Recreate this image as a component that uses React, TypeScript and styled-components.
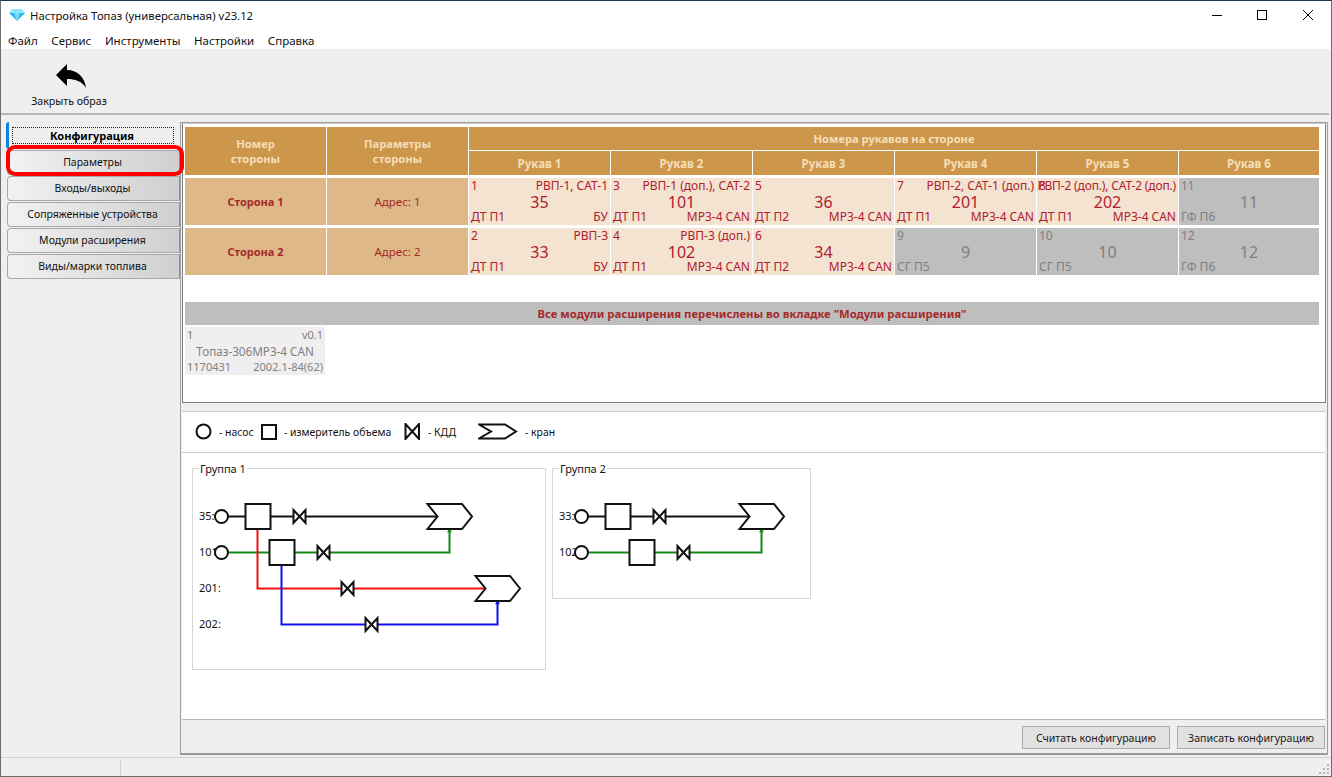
import React from 'react'
import styled, { createGlobalStyle } from 'styled-components'

const FONT = `"Noto Sans", "Open Sans", "Liberation Sans", sans-serif`
const HEAD_BG = '#cc964b'
const HEAD_TEXT = '#f5dfb8'
const SIDE_BG = '#deb887'
const BROWN = '#a52a2a'
const GRAY_CELL = '#bebebe'

const GlobalStyle = createGlobalStyle`
  html, body {
    margin: 0;
    padding: 0;
    background: #efefef;
  }
  * {
    box-sizing: border-box;
  }
`

const Window = styled.div`
  display: flex;
  flex-direction: column;
  width: 1332px;
  height: 777px;
  overflow: hidden;
  background: #efefef;
  border: 1px solid #6d6d6d;
  border-top-color: #1d3557;
  font-family: ${FONT};
  font-size: 11px;
  color: #111;
`

const TitleBar = styled.div`
  display: flex;
  align-items: center;
  height: 29px;
  flex-shrink: 0;
  background: #fff;
  padding: 0 0 1px 8px;
  font-size: 11.3px;
`

const TitleText = styled.span`
  margin-left: 5px;
  flex: 1;
`

const WinButton = styled.div`
  display: flex;
  align-items: center;
  justify-content: center;
  width: 45.75px;
  height: 28px;
`

const Controls = styled.div`
  display: flex;
`

const MenuBar = styled.div`
  display: flex;
  gap: 13.6px;
  align-items: center;
  height: 19px;
  flex-shrink: 0;
  background: #fff;
  padding: 2px 0 0 7px;
  font-size: 11.5px;
`

const Toolbar = styled.div`
  height: 66px;
  flex-shrink: 0;
  padding: 15px 0 0 29px;
  margin-right: 2px;
  border-bottom: 2px solid #b6b6b6;
`

const ToolButton = styled.div`
  display: flex;
  flex-direction: column;
  align-items: center;
  width: 78px;
  gap: 6px;
  font-size: 10.6px;
  white-space: nowrap;

  svg {
    margin-left: 4px;
  }
`

const Body = styled.div`
  display: flex;
  flex: 1;
  min-height: 0;
  padding: 7px 3px 2px 5px;
`

const TabList = styled.div`
  display: flex;
  flex-direction: column;
  width: 174px;
  flex-shrink: 0;
  gap: 1px;
`

const ActiveTab = styled.div`
  display: flex;
  height: 27px;
  padding: 5px 6px 5px 3px;
  border-left: 3px solid #0a84d8;
  border-radius: 3px 0 0 3px;
`

const FocusLabel = styled.div`
  flex: 1;
  display: flex;
  align-items: center;
  justify-content: center;
  padding-right: 2px;
  border: 1px dotted #222;
  font-weight: 700;
  color: #000;
`

const Tab = styled.div<{ $marked?: boolean }>`
  position: relative;
  display: flex;
  align-items: center;
  justify-content: center;
  height: 25px;
  margin-left: 1px;
  padding: 0 2px 2px 0;
  font-size: 10.5px;
  background: linear-gradient(to right, #f2f2f2, #cfcfcf);
  border: 1px solid #a8a8a8;
  border-right-color: #8f8f8f;
  border-radius: 4px 0 0 4px;

  ${({ $marked }) =>
    $marked &&
    `
    &::after {
      content: '';
      position: absolute;
      left: -2px;
      right: -5px;
      top: -6px;
      bottom: -2px;
      border: 4px solid #f00;
      border-radius: 9px;
    }
  `}
`

const MainPanel = styled.div`
  display: flex;
  flex-direction: column;
  flex: 1;
  min-width: 0;
  border: 1px solid #a0a0a0;
  border-bottom: 2px solid #9a9a9a;
  padding: 0 1px;
`

const TopBox = styled.div`
  height: 280px;
  flex-shrink: 0;
  padding: 3px 2px;
  background: #fff;
  border: 1px solid #7f7f7f;
  border-top-color: #c8c8c8;
`

const HeadGrid = styled.div`
  display: grid;
  grid-template-columns: repeat(7, 141px) 140px;
  grid-template-rows: 23px 24px;
  gap: 1px;
  margin-bottom: 3px;
`

const RowGrid = styled.div`
  display: grid;
  grid-template-columns: repeat(7, 141px) 140px;
  grid-auto-rows: 47px;
  column-gap: 1px;
  row-gap: 3px;
`

const HeadCell = styled.div<{ $tall?: boolean; $wide?: boolean }>`
  display: flex;
  align-items: center;
  justify-content: center;
  text-align: center;
  line-height: 15px;
  background: ${HEAD_BG};
  color: ${HEAD_TEXT};
  font-weight: 700;
  font-size: ${({ $tall, $wide }) => ($tall || $wide ? '11.2px' : '11.5px')};
  ${({ $tall }) => $tall && 'grid-row: span 2;'}
  ${({ $wide }) => $wide && 'grid-column: span 6;'}
`

const SideCell = styled.div`
  display: flex;
  align-items: center;
  justify-content: center;
  background: ${SIDE_BG};
  color: ${BROWN};
  font-size: 11.5px;
`

const SideName = styled.span`
  font-weight: 700;
  font-size: 11px;
`

const Hose = styled.div<{ $off?: boolean }>`
  display: grid;
  grid-template-rows: 15px 16px 15px;
  grid-template-columns: minmax(0, 1fr);
  padding: 0 2px;
  background: ${({ $off }) => ($off ? GRAY_CELL : '#f3e3d0')};
  color: ${({ $off }) => ($off ? '#808080' : '#b0202e')};
  font-size: 12px;
  white-space: nowrap;
  line-height: 15px;
`

const HoseLeft = styled.span<{ $row: number }>`
  grid-row: ${({ $row }) => $row};
  grid-column: 1;
  justify-self: start;
`

const HoseRight = styled.span<{ $row: number; $tight?: boolean }>`
  grid-row: ${({ $row }) => $row};
  grid-column: 1;
  justify-self: end;
  ${({ $tight }) => $tight && 'letter-spacing: -0.16px;'}
`

const HoseNumber = styled.span`
  grid-row: 2;
  grid-column: 1;
  justify-self: center;
  margin-top: 1px;
  font-size: 16px;
  line-height: 17px;
`

const Banner = styled.div`
  display: flex;
  align-items: center;
  justify-content: center;
  width: 1134px;
  height: 23px;
  margin-top: 27px;
  background: ${GRAY_CELL};
  color: ${BROWN};
  font-weight: 700;
  font-size: 11.3px;
`

const ModuleCard = styled.div`
  display: grid;
  grid-template-columns: 1fr;
  grid-auto-rows: 16px;
  width: 140px;
  height: 48px;
  margin-top: 2px;
  padding: 0 2px;
  background: #efefef;
  color: #808080;
  line-height: 16px;
`

const ModuleLine = styled.div`
  display: flex;
  justify-content: space-between;
`

const ModuleName = styled.div`
  text-align: center;
  font-size: 11.7px;
`

const LegendBar = styled.div`
  display: flex;
  align-items: center;
  height: 42px;
  flex-shrink: 0;
  margin: 8px 1px 0 0;
  padding: 0 0 1px 13px;
  background: #fff;
  border-top: 1px solid #cdcdcd;
  border-bottom: 1px solid #cdcdcd;
  font-size: 10.4px;
`

const LegendItem = styled.div<{ $width: number }>`
  display: flex;
  align-items: center;
  gap: 7px;
  width: ${({ $width }) => $width}px;
  flex-shrink: 0;
`

const DiagramArea = styled.div`
  display: flex;
  align-items: flex-start;
  gap: 6px;
  flex: 1;
  min-height: 0;
  margin-right: 1px;
  padding: 15px 0 0 10px;
  background: #fff;
`

const GroupBox = styled.fieldset<{ $width: number; $height: number }>`
  position: relative;
  width: ${({ $width }) => $width}px;
  height: ${({ $height }) => $height}px;
  margin: 0;
  padding: 0;
  border: 1px solid #d6d6d6;

  svg {
    display: block;
  }
`

const GroupTitle = styled.span`
  position: absolute;
  left: 6px;
  top: -7px;
  padding: 0 1px;
  background: #fff;
  line-height: 14px;
`

const Footer = styled.div`
  display: flex;
  justify-content: flex-end;
  gap: 7px;
  height: 34px;
  flex-shrink: 0;
  margin-right: 1px;
  padding-top: 6px;
  border-top: 1px solid #b4b4b4;
`

const FootButton = styled.div`
  display: flex;
  align-items: center;
  justify-content: center;
  width: 148px;
  height: 23px;
  background: #e1e1e1;
  border: 1px solid #adadad;
  color: #1a1a1a;
  font-size: 10.6px;
`

const StatusBar = styled.div`
  display: flex;
  align-items: center;
  justify-content: space-between;
  height: 19px;
  flex-shrink: 0;
  border-top: 1px solid #d2d2d2;
`

const StatusPart = styled.div`
  width: 120px;
  height: 16px;
  margin-top: 1px;
  border-right: 1px solid #d2d2d2;
`

const Grip = styled.svg`
  align-self: flex-end;
  margin: 0 1px 1px 0;
`

type HoseData = {
  no: number
  tag?: string
  num: number
  fuel: string
  unit?: string
  off?: boolean
}

const rows: { side: string; address: string; hoses: HoseData[] }[] = [
  {
    side: 'Сторона 1',
    address: 'Адрес: 1',
    hoses: [
      { no: 1, tag: 'РВП-1, САТ-1', num: 35, fuel: 'ДТ П1', unit: 'БУ' },
      { no: 3, tag: 'РВП-1 (доп.), САТ-2', num: 101, fuel: 'ДТ П1', unit: 'МР3-4 CAN' },
      { no: 5, num: 36, fuel: 'ДТ П2', unit: 'МР3-4 CAN' },
      { no: 7, tag: 'РВП-2, САТ-1 (доп.)', num: 201, fuel: 'ДТ П1', unit: 'МР3-4 CAN' },
      { no: 8, tag: 'РВП-2 (доп.), САТ-2 (доп.)', num: 202, fuel: 'ДТ П1', unit: 'МР3-4 CAN' },
      { no: 11, num: 11, fuel: 'ГФ П6', off: true },
    ],
  },
  {
    side: 'Сторона 2',
    address: 'Адрес: 2',
    hoses: [
      { no: 2, tag: 'РВП-3', num: 33, fuel: 'ДТ П1', unit: 'БУ' },
      { no: 4, tag: 'РВП-3 (доп.)', num: 102, fuel: 'ДТ П1', unit: 'МР3-4 CAN' },
      { no: 6, num: 34, fuel: 'ДТ П2', unit: 'МР3-4 CAN' },
      { no: 9, num: 9, fuel: 'СГ П5', off: true },
      { no: 10, num: 10, fuel: 'СГ П5', off: true },
      { no: 12, num: 12, fuel: 'ГФ П6', off: true },
    ],
  },
]

const tabs = ['Входы/выходы', 'Сопряженные устройства', 'Модули расширения', 'Виды/марки топлива']

const INK = '#111'

const Pump = ({ x, y }: { x: number; y: number }) => (
  <circle cx={x} cy={y} r={6.5} fill="#fff" stroke={INK} strokeWidth={2} />
)

const Meter = ({ x, y }: { x: number; y: number }) => (
  <rect x={x} y={y} width={25} height={25} fill="#fff" stroke={INK} strokeWidth={2} />
)

const Valve = ({ x, y }: { x: number; y: number }) => (
  <path
    d={`M${x} ${y}L${x + 12} ${y + 13}V${y}L${x} ${y + 13}Z`}
    fill="#fff"
    stroke={INK}
    strokeWidth={2}
  />
)

const Tap = ({ x, y }: { x: number; y: number }) => (
  <path
    d={`M${x} ${y}H${x + 34.5}L${x + 44.5} ${y + 12.5}L${x + 34.5} ${y + 25}H${x}L${x + 10} ${y + 12.5}Z`}
    fill="#fff"
    stroke={INK}
    strokeWidth={2}
  />
)

const Pipe = ({ d, color }: { d: string; color: string }) => (
  <path d={d} fill="none" stroke={color} strokeWidth={2} />
)

const Tick = ({ x, y, color }: { x: number; y: number; color: string }) => (
  <path d={`M${x - 2} ${y + 3}L${x} ${y}L${x + 2} ${y + 3}Z`} fill={color} stroke={color} strokeWidth={0.6} />
)

const Label = styled.text`
  font-family: ${FONT};
  font-size: 11px;
  fill: #111;
`

const GREEN = '#138a13'
const RED = '#f01010'
const BLUE = '#1010f0'

const GroupOne = () => (
  <svg width={352} height={200} viewBox="193 469 352 200">
    <Label x={199} y={520}>35:</Label>
    <Label x={199} y={556}>101:</Label>
    <Label x={199} y={592}>201:</Label>
    <Label x={199} y={628}>202:</Label>
    <Pipe d="M228 516.5H245" color={INK} />
    <Pipe d="M228 552.5H449.5V530" color={GREEN} />
    <Pipe d="M257.5 529V588.5H486" color={RED} />
    <Pipe d="M281.5 565V624.5H497.5V602" color={BLUE} />
    <Tick x={449.5} y={529} color={GREEN} />
    <Tick x={497.5} y={601} color={BLUE} />
    <Pump x={221.5} y={516.5} />
    <Pump x={221.5} y={552.5} />
    <Pipe d="M270 516.5H293" color={INK} />
    <Meter x={245.5} y={504} />
    <Meter x={269.5} y={540} />
    <Valve x={293.5} y={510} />
    <Valve x={317.5} y={546} />
    <Valve x={341.5} y={582} />
    <Valve x={365.5} y={618} />
    <Tap x={427.5} y={504} />
    <Tap x={475.5} y={576} />
    <Pipe d="M305 516.5H437" color={INK} />
  </svg>
)

const GroupTwo = () => (
  <svg width={257} height={129} viewBox="553 469 257 129">
    <Label x={559} y={520}>33:</Label>
    <Label x={559} y={556}>102:</Label>
    <Pipe d="M588 516.5H605" color={INK} />
    <Pipe d="M588 552.5H761.5V530" color={GREEN} />
    <Tick x={761.5} y={529} color={GREEN} />
    <Pump x={581.5} y={516.5} />
    <Pump x={581.5} y={552.5} />
    <Pipe d="M630 516.5H653" color={INK} />
    <Meter x={605.5} y={504} />
    <Meter x={629.5} y={540} />
    <Valve x={653.5} y={510} />
    <Valve x={677.5} y={546} />
    <Tap x={739.5} y={504} />
    <Pipe d="M665 516.5H749.5" color={INK} />
  </svg>
)

const Gem = () => (
  <svg width={16} height={12} viewBox="0 0 16 12">
    <path d="M3 0H13L16 4H0Z" fill="#8fe6fb" />
    <path d="M0 4H16L8 12Z" fill="#27bdf0" />
    <path d="M5 4H11L8 12Z" fill="#7adcf8" />
  </svg>
)

const BackArrow = () => (
  <svg width={30} height={24} viewBox="0 0 30 24">
    <path d="M0 11L11 0V6C22 6 29 14 30 24C26 17 19 15 11 15V22Z" fill="#000" />
  </svg>
)

export default function App(): JSX.Element {
  return (
    <Window>
      <GlobalStyle />
      <TitleBar>
        <Gem />
        <TitleText>Настройка Топаз (универсальная) v23.12</TitleText>
        <Controls>
          <WinButton>
            <svg width={10} height={10} viewBox="0 0 10 10">
              <path d="M0 5.5H10" stroke="#000" />
            </svg>
          </WinButton>
          <WinButton>
            <svg width={10} height={10} viewBox="0 0 10 10">
              <rect x={0.5} y={0.5} width={9} height={9} fill="none" stroke="#000" />
            </svg>
          </WinButton>
          <WinButton>
            <svg width={10} height={10} viewBox="0 0 10 10">
              <path d="M0 0L10 10M10 0L0 10" stroke="#000" />
            </svg>
          </WinButton>
        </Controls>
      </TitleBar>

      <MenuBar>
        <span>Файл</span>
        <span>Сервис</span>
        <span>Инструменты</span>
        <span>Настройки</span>
        <span>Справка</span>
      </MenuBar>

      <Toolbar>
        <ToolButton>
          <BackArrow />
          <span>Закрыть образ</span>
        </ToolButton>
      </Toolbar>

      <Body>
        <TabList>
          <ActiveTab>
            <FocusLabel>Конфигурация</FocusLabel>
          </ActiveTab>
          <Tab $marked>Параметры</Tab>
          {tabs.map((name) => (
            <Tab key={name}>{name}</Tab>
          ))}
        </TabList>

        <MainPanel>
          <TopBox>
            <HeadGrid>
              <HeadCell $tall>
                Номер
                <br />
                стороны
              </HeadCell>
              <HeadCell $tall>
                Параметры
                <br />
                стороны
              </HeadCell>
              <HeadCell $wide>Номера рукавов на стороне</HeadCell>
              {[1, 2, 3, 4, 5, 6].map((n) => (
                <HeadCell key={n}>Рукав {n}</HeadCell>
              ))}
            </HeadGrid>

            <RowGrid>
              {rows.map((row) => (
                <React.Fragment key={row.side}>
                  <SideCell>
                    <SideName>{row.side}</SideName>
                  </SideCell>
                  <SideCell>{row.address}</SideCell>
                  {row.hoses.map((hose) => (
                    <Hose key={hose.no} $off={hose.off}>
                      <HoseLeft $row={1}>{hose.no}</HoseLeft>
                      {hose.tag && (
                        <HoseRight $row={1} $tight={hose.tag.length > 22}>
                          {hose.tag}
                        </HoseRight>
                      )}
                      <HoseNumber>{hose.num}</HoseNumber>
                      <HoseLeft $row={3}>{hose.fuel}</HoseLeft>
                      {hose.unit && <HoseRight $row={3}>{hose.unit}</HoseRight>}
                    </Hose>
                  ))}
                </React.Fragment>
              ))}
            </RowGrid>

            <Banner>Все модули расширения перечислены во вкладке "Модули расширения"</Banner>

            <ModuleCard>
              <ModuleLine>
                <span>1</span>
                <span>v0.1</span>
              </ModuleLine>
              <ModuleName>Топаз-306МР3-4 CAN</ModuleName>
              <ModuleLine>
                <span>1170431</span>
                <span>2002.1-84(62)</span>
              </ModuleLine>
            </ModuleCard>
          </TopBox>

          <LegendBar>
            <LegendItem $width={66}>
              <svg width={17} height={17} viewBox="0 0 17 17">
                <circle cx={8.5} cy={8.5} r={7} fill="#fff" stroke={INK} strokeWidth={2} />
              </svg>
              <span>- насос</span>
            </LegendItem>
            <LegendItem $width={143}>
              <svg width={16} height={16} viewBox="0 0 16 16">
                <rect x={1} y={1} width={14} height={14} fill="#fff" stroke={INK} strokeWidth={2} />
              </svg>
              <span>- измеритель объема</span>
            </LegendItem>
            <LegendItem $width={74}>
              <svg width={17} height={17} viewBox="0 0 17 17">
                <path d="M1.5 1L15 16V1L1.5 16Z" fill="#fff" stroke={INK} strokeWidth={2} />
              </svg>
              <span>- КДД</span>
            </LegendItem>
            <LegendItem $width={90}>
              <svg width={40} height={17} viewBox="0 0 40 17">
                <path d="M1 1.5H27L38 8.5L27 15.5H1L13 8.5Z" fill="#fff" stroke={INK} strokeWidth={2} />
              </svg>
              <span>- кран</span>
            </LegendItem>
          </LegendBar>

          <DiagramArea>
            <GroupBox $width={354} $height={202}>
              <GroupTitle>Группа 1</GroupTitle>
              <GroupOne />
            </GroupBox>
            <GroupBox $width={259} $height={131}>
              <GroupTitle>Группа 2</GroupTitle>
              <GroupTwo />
            </GroupBox>
          </DiagramArea>

          <Footer>
            <FootButton>Считать конфигурацию</FootButton>
            <FootButton>Записать конфигурацию</FootButton>
          </Footer>
        </MainPanel>
      </Body>

      <StatusBar>
        <StatusPart />
        <Grip width={11} height={11} viewBox="0 0 11 11">
          <path d="M8 8h2v2H8zM4 8h2v2H4zM0 8h2v2H0zM8 4h2v2H8zM4 4h2v2H4zM8 0h2v2H8z" fill="#b5b5b5" />
        </Grip>
      </StatusBar>
    </Window>
  )
}
